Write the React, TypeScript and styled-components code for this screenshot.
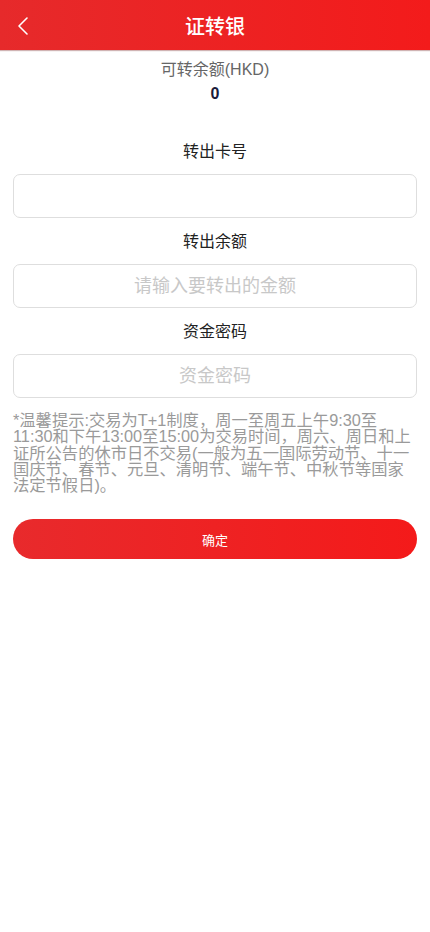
import React from "react";
import styled, { createGlobalStyle } from "styled-components";

const GlobalStyle = createGlobalStyle`
  * { box-sizing: border-box; }
  html, body { margin: 0; padding: 0; background: #fff; }
  body { font-family: "Liberation Sans", "Noto Sans CJK SC", sans-serif; }
  input { font-family: inherit; }
`;

const Page = styled.div`
  width: 430px;
  min-height: 932px;
  background: #fff;
  display: flex;
  flex-direction: column;
`;

const Header = styled.header`
  height: 50px;
  background: linear-gradient(to right, #e62a2b, #f31b1b);
  display: flex;
  align-items: center;
  justify-content: center;
  position: relative;
  box-shadow: 0 1px 1px rgba(120, 40, 40, 0.35);
`;

const BackButton = styled.button`
  position: absolute;
  left: 12px;
  top: 15px;
  width: 22px;
  height: 22px;
  padding: 0;
  border: none;
  background: transparent;
  display: flex;
  align-items: center;
  justify-content: center;
`;

const Title = styled.h1`
  margin: 0;
  color: #fff;
  font-size: 20px;
  font-weight: 500;
  line-height: 24px;
  margin-top: 4px;
`;

const Content = styled.main`
  padding: 0 13px;
  display: flex;
  flex-direction: column;
`;

const Summary = styled.section`
  padding-top: 9px;
  display: flex;
  flex-direction: column;
  align-items: center;
`;

const SummaryLabel = styled.div`
  font-size: 16px;
  line-height: 22px;
  color: #666;
`;

const SummaryValue = styled.div`
  font-size: 16px;
  font-weight: 700;
  line-height: 24px;
  color: #1b1b3a;
  margin-top: 1px;
`;

const Field = styled.div<{ $first?: boolean }>`
  display: flex;
  flex-direction: column;
  align-items: stretch;
  margin-top: ${(p) => (p.$first ? "35px" : "13px")};
`;

const Label = styled.label`
  text-align: center;
  font-size: 16px;
  line-height: 22px;
  color: #222;
  margin-bottom: 11px;
`;

const Input = styled.input`
  height: 44px;
  width: 100%;
  border: 1px solid #dedede;
  border-radius: 7px;
  background: #fff;
  text-align: center;
  font-size: 18px;
  color: #333;
  outline: none;
  &::placeholder {
    color: #c8c8c8;
  }
`;

const Tip = styled.p`
  margin: 14px 0 0;
  padding-right: 4px;
  font-size: 16.3px;
  line-height: 16.3px;
  color: #9a9a9a;
`;

const SubmitButton = styled.button`
  margin-top: 26px;
  height: 40px;
  width: 100%;
  border: none;
  border-radius: 20px;
  background: linear-gradient(to right, #e82a2c, #f41a1a);
  color: #fff;
  font-size: 13px;
  font-family: inherit;
`;

export default function App() {
  return (
    <Page>
      <GlobalStyle />
      <Header>
        <BackButton aria-label="back">
          <svg width="14" height="20" viewBox="0 0 14 20" fill="none">
            <path d="M11 2 L3 10 L11 18" stroke="#fff" strokeWidth="1.6" strokeLinecap="round" strokeLinejoin="round" />
          </svg>
        </BackButton>
        <Title>证转银</Title>
      </Header>
      <Content>
        <Summary>
          <SummaryLabel>可转余额(HKD)</SummaryLabel>
          <SummaryValue>0</SummaryValue>
        </Summary>
        <Field $first>
          <Label>转出卡号</Label>
          <Input type="text" />
        </Field>
        <Field>
          <Label>转出余额</Label>
          <Input type="text" placeholder="请输入要转出的金额" />
        </Field>
        <Field>
          <Label>资金密码</Label>
          <Input type="password" placeholder="资金密码" />
        </Field>
        <Tip>
          *温馨提示:交易为T+1制度，周一至周五上午9:30至11:30和下午13:00至15:00为交易时间，周六、周日和上证所公告的休市日不交易(一般为五一国际劳动节、十一国庆节、春节、元旦、清明节、端午节、中秋节等国家法定节假日)。
        </Tip>
        <SubmitButton>确定</SubmitButton>
      </Content>
    </Page>
  );
}
